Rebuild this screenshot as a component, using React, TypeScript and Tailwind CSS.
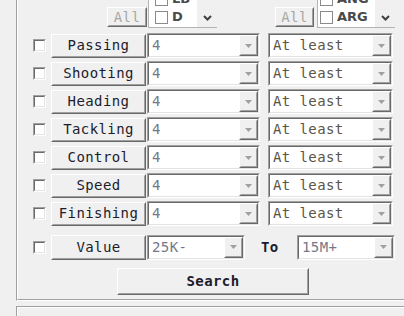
import type { ReactNode } from 'react';

const labels = ['Passing', 'Shooting', 'Heading', 'Tackling', 'Control', 'Speed', 'Finishing'];

function Check() {
  return (
    <div className="w-[13px] h-[13px] shrink-0 border border-t-[#a0a0a0] border-l-[#a0a0a0] border-b-white border-r-white">
      <div className="w-full h-full bg-white border border-t-[#696969] border-l-[#696969] border-b-[#e3e3e3] border-r-[#e3e3e3]" />
    </div>
  );
}

function ListCheck() {
  return <div className="w-[13px] h-[13px] shrink-0 bg-white border border-[#8a8a8a]" />;
}

function Raised({ className, children }: { className: string; children?: ReactNode }) {
  return (
    <div className={`${className} shrink-0 border border-t-white border-l-white border-b-[#696969] border-r-[#696969]`}>
      <div className="w-full h-full flex items-center justify-center bg-[#f0f0f0] border border-t-[#f0f0f0] border-l-[#f0f0f0] border-b-[#a0a0a0] border-r-[#a0a0a0]">
        {children}
      </div>
    </div>
  );
}

function Combo({ value, className, dark }: { value: string; className: string; dark?: boolean }) {
  return (
    <div className={`${className} h-[25px] shrink-0 border border-t-[#a0a0a0] border-l-[#a0a0a0] border-b-white border-r-white`}>
      <div className="w-full h-full flex bg-white border border-t-[#696969] border-l-[#696969] border-b-[#e3e3e3] border-r-[#e3e3e3]">
        <span className={`flex-1 flex items-center pl-[3px] ${dark ? 'text-[#5a5548]' : 'text-[#757888]'}`}>{value}</span>
        <Raised className="w-[19px] h-full">
          <svg width="7" height="4" viewBox="0 0 7 4">
            <path d="M0 0h7L3.5 4z" fill="#a0a0a0" />
          </svg>
        </Raised>
      </div>
    </div>
  );
}

function Chevron() {
  return (
    <svg width="9" height="6" viewBox="0 0 9 6">
      <path d="M1 1l3.5 3.5L8 1" stroke="#404040" strokeWidth="2" fill="none" />
    </svg>
  );
}

function ListBox({ items, className, pad }: { items: string[]; className: string; pad: string }) {
  return (
    <div className={`${className} h-[28px] shrink-0 flex border-l border-b border-[#b4b4b4] overflow-hidden`}>
      <div className={`flex-1 bg-white flex flex-col justify-end pb-[1px] ${pad}`}>
        {items.map((it) => (
          <div key={it} className="h-[18px] shrink-0 flex items-center gap-[4px]">
            <ListCheck />
            <span className="font-['DejaVu_Sans',sans-serif] font-bold text-[13px] tracking-normal text-[#4a4a4a]">{it}</span>
          </div>
        ))}
      </div>
      <div className="w-[20px] flex items-end justify-center pb-[6px]">
        <Chevron />
      </div>
    </div>
  );
}

export default function App() {
  return (
    <div className="w-[404px] h-[316px] bg-[#f0f0f0] overflow-hidden flex flex-col font-['DejaVu_Sans_Mono',monospace] text-[14px] tracking-[0.4px] text-[#1c1c2c]">
      {/* Group box */}
      <div className="ml-[16px] h-[301px] shrink-0 border-l border-b border-l-[#a0a0a0] border-b-white">
        <div className="h-full border-l border-b border-l-white border-b-[#a0a0a0] flex flex-col">
          {/* Top filters */}
          <div className="h-[28px] flex items-end">
            <Raised className="ml-[89px] mb-[1px] w-[40px] h-[20px]">
              <span className="text-[#a8a8a8]">All</span>
            </Raised>
            <ListBox items={['LB', 'D']} className="ml-[1px] w-[69px]" pad="pl-[6px]" />
            <Raised className="ml-[58px] mb-[1px] w-[39px] h-[20px]">
              <span className="text-[#a8a8a8]">All</span>
            </Raised>
            <ListBox items={['ANG', 'ARG']} className="ml-[3px] w-[78px]" pad="pl-[2px]" />
          </div>

          {/* Attribute rows */}
          <div className="mt-[5px] flex flex-col gap-[3px]">
            {labels.map((l) => (
              <div key={l} className="h-[25px] flex items-center">
                <div className="ml-[15px]">
                  <Check />
                </div>
                <Raised className="ml-[5px] w-[95px] h-[24px]">{l}</Raised>
                <Combo value="4" className="ml-[1px] w-[113px]" />
                <Combo value="At least" className="ml-[8px] w-[125px]" dark />
              </div>
            ))}
          </div>

          {/* Value row */}
          <div className="mt-[8px] h-[26px] flex items-center">
            <div className="ml-[15px]">
              <Check />
            </div>
            <Raised className="ml-[5px] w-[95px] h-[25px]">Value</Raised>
            <Combo value="25K-" className="ml-[1px] w-[98px]" />
            <span className="ml-[16px] w-[36px] font-bold text-[#1c1c2c]">To</span>
            <Combo value="15M+" className="w-[98px]" />
          </div>

          <div className="mt-[8px] flex">
            <Raised className="ml-[99px] w-[192px] h-[27px]">
              <span className="font-bold">Search</span>
            </Raised>
          </div>
        </div>
      </div>

      {/* Next group box */}
      <div className="mt-[5px] ml-[16px] flex-1 border-l border-t border-[#a0a0a0]">
        <div className="h-full border-l border-t border-white" />
      </div>
    </div>
  );
}
